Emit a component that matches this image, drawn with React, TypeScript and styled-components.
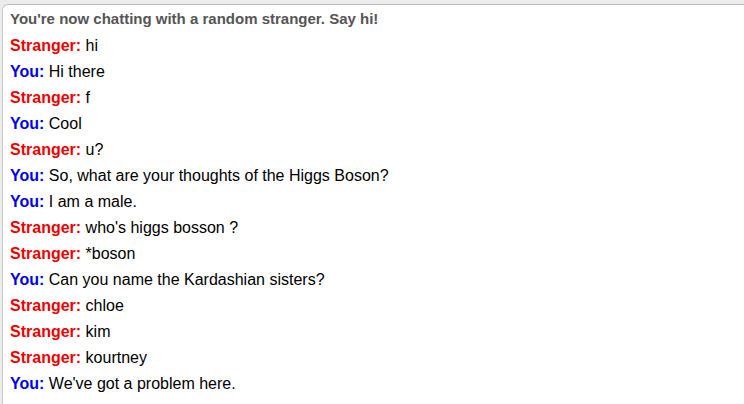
import styled, { createGlobalStyle } from "styled-components";

const GlobalStyle = createGlobalStyle`
  html, body {
    margin: 0;
    padding: 0;
    background: #ececec;
    overflow: hidden;
  }
  body {
    font-family: "Liberation Sans", Arial, sans-serif;
  }
`;

const Page = styled.div`
  padding: 4px 0 0 2px;
  height: 404px;
  box-sizing: border-box;
`;

const ChatLog = styled.div`
  background: #fff;
  border-top: 1px solid #bcbcbc;
  border-left: 1px solid #c8c8c8;
  border-top-left-radius: 6px;
  height: 420px;
  padding: 2px 0 0 7px;
  box-sizing: border-box;
`;

const Status = styled.div`
  font-size: 15px;
  font-weight: bold;
  color: #555;
  height: 24px;
  line-height: 24px;
  margin-bottom: 2px;
`;

const Row = styled.div`
  font-size: 16px;
  color: #000;
  height: 26px;
  line-height: 26px;
  white-space: nowrap;
`;

const Who = styled.strong<{ $me: boolean }>`
  color: ${({ $me }) => ($me ? "#0000ee" : "#ee0000")};
`;

type Msg = { me: boolean; text: string };

const messages: Msg[] = [
  { me: false, text: "hi" },
  { me: true, text: "Hi there" },
  { me: false, text: "f" },
  { me: true, text: "Cool" },
  { me: false, text: "u?" },
  { me: true, text: "So, what are your thoughts of the Higgs Boson?" },
  { me: true, text: "I am a male." },
  { me: false, text: "who's higgs bosson ?" },
  { me: false, text: "*boson" },
  { me: true, text: "Can you name the Kardashian sisters?" },
  { me: false, text: "chloe" },
  { me: false, text: "kim" },
  { me: false, text: "kourtney" },
  { me: true, text: "We've got a problem here." },
];

export default function App() {
  return (
    <Page>
      <GlobalStyle />
      <ChatLog>
        <Status>You're now chatting with a random stranger. Say hi!</Status>
        {messages.map((m, i) => (
          <Row key={i}>
            <Who $me={m.me}>{m.me ? "You:" : "Stranger:"}</Who> {m.text}
          </Row>
        ))}
      </ChatLog>
    </Page>
  );
}
